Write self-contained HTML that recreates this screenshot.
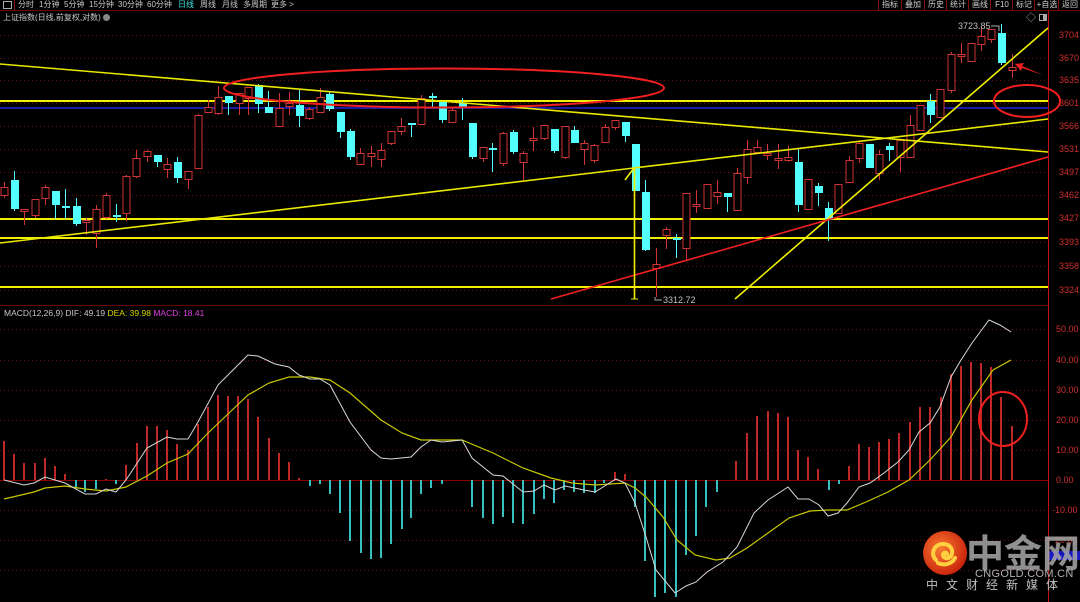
<!DOCTYPE html>
<html><head><meta charset="utf-8"><style>
html,body{margin:0;padding:0;background:#000;width:1080px;height:602px;overflow:hidden}
body{font-family:"Liberation Sans","Noto Sans CJK SC",sans-serif;position:relative}
.tb{position:absolute;top:0;left:0;width:1080px;height:10px;border-bottom:1px solid #6a0000;font-size:8px;line-height:10px;color:#c8c8c8;white-space:nowrap}
.tb span{position:absolute;top:0}
.rb{position:absolute;top:0;height:10px;border-left:1px solid #8a1010;font-size:8px;line-height:10px;color:#d0d0d0;text-align:center}
svg{position:absolute;left:0;top:0}
.r{fill:#000;stroke:#d03434;stroke-width:1}
.c{fill:#54ffff}
</style></head><body>
<svg width="1080" height="602" viewBox="0 0 1080 602">
<g stroke="#6a0c0c" stroke-dasharray="1,3" stroke-width="1">
<path d="M0 35.5H1048M0 58.5H1048M0 80.5H1048M0 103.5H1048M0 126.5H1048M0 149.5H1048M0 172.5H1048M0 195.5H1048M0 218.5H1048M0 242.5H1048M0 266.5H1048M0 290.5H1048"/>
<path d="M0 329.5H1048M0 360.5H1048M0 390.5H1048M0 420.5H1048M0 450.5H1048M0 510.5H1048M0 540.5H1048M0 570.5H1048"/>
</g>
<path d="M0 480.5H1048" stroke="#8a0000"/>
<path d="M0 305.5H1048" stroke="#6a0000"/>
<path d="M1048.5 11V602" stroke="#c01010"/>
<path d="M0 101H1048M0 219H1048M0 238H1048M0 287H1048" stroke="#f0f000" stroke-width="2"/>
<path d="M0 108H1048" stroke="#1a1aa0" stroke-width="2"/>
<g stroke-width="1">
<path stroke="#d03434" d="M4.5 182V198M24.5 209V225M35.5 199V218M45.5 185V205M86.5 218V235M96.5 205V248M106.5 193V219M126.5 175V221M136.5 150V178M147.5 150V162M167.5 158V178M188.5 171V189M198.5 114V168M208.5 100V113M218.5 86V115M239.5 93V115M248.5 87V115M279.5 93V127M289.5 92V115M309.5 107V120M320.5 88V113M360.5 148V164M371.5 146V167M381.5 143V167M391.5 131V145M401.5 118V135M421.5 95V125M452.5 108V123M483.5 147V162M503.5 132V166M523.5 151V180M533.5 127V151M544.5 125V140M565.5 126V159M584.5 140V165M594.5 144V163M605.5 124V142M615.5 120V130M656.5 248V297M666.5 227V249M686.5 193V260M696.5 190V213M707.5 184V208M717.5 180V204M737.5 168V210M747.5 140V184M757.5 140V153M767.5 144V160M778.5 144V169M788.5 146V162M808.5 179V209M838.5 184V213M849.5 156V183M859.5 141V163M879.5 150V180M900.5 140V172M910.5 115V158M920.5 105V130M940.5 89V117M951.5 52V93M961.5 43V63M971.5 43V61M981.5 27V51M991.5 29V43M1012.5 54V78"/>
<path stroke="#54ffff" d="M14.5 171V211M55.5 191V219M65.5 189V219M76.5 198V226M116.5 204V222M157.5 155V167M177.5 157V183M228.5 96V115M258.5 84V113M268.5 91V113M299.5 90V127M329.5 92V111M340.5 112V138M350.5 129V160M411.5 123V137M432.5 93V107M442.5 102V123M462.5 98V120M472.5 123V159M492.5 143V172M513.5 130V154M554.5 129V153M574.5 126V143M625.5 122V142M635.5 144V191M645.5 180V251M676.5 234V258M727.5 193V212M798.5 148V212M818.5 183V206M828.5 202V241M869.5 144V168M889.5 143V161M930.5 94V123M1001.5 24V65"/>
</g>
<g class="r">
<rect x="1" y="187.5" width="7" height="8"/><rect x="21" y="209.5" width="7" height="2"/><rect x="32" y="199.5" width="7" height="16"/><rect x="42" y="187.5" width="7" height="11"/><rect x="83" y="220.5" width="7" height="2"/><rect x="93" y="209.5" width="7" height="24"/><rect x="103" y="195.5" width="7" height="22"/><rect x="123" y="176.5" width="7" height="37"/><rect x="133" y="158.5" width="7" height="18"/><rect x="144" y="151.5" width="7" height="5"/><rect x="164" y="164.5" width="7" height="5"/><rect x="185" y="171.5" width="7" height="8"/><rect x="195" y="115.5" width="7" height="53"/><rect x="205" y="107.5" width="7" height="5"/><rect x="215" y="97.5" width="7" height="16"/><rect x="236" y="93.5" width="7" height="10"/><rect x="245" y="87.5" width="7" height="11"/><rect x="276" y="108.5" width="7" height="18"/><rect x="286" y="103.5" width="7" height="3"/><rect x="306" y="109.5" width="7" height="9"/><rect x="317" y="97.5" width="7" height="15"/><rect x="357" y="153.5" width="7" height="11"/><rect x="368" y="153.5" width="7" height="3"/><rect x="378" y="150.5" width="7" height="9"/><rect x="388" y="131.5" width="7" height="12"/><rect x="398" y="126.5" width="7" height="5"/><rect x="418" y="98.5" width="7" height="26"/><rect x="449" y="110.5" width="7" height="12"/><rect x="480" y="147.5" width="7" height="11"/><rect x="500" y="133.5" width="7" height="30"/><rect x="520" y="153.5" width="7" height="9"/><rect x="530" y="138.5" width="7" height="2"/><rect x="541" y="125.5" width="7" height="13"/><rect x="562" y="126.5" width="7" height="31"/><rect x="581" y="143.5" width="7" height="6"/><rect x="591" y="145.5" width="7" height="15"/><rect x="602" y="127.5" width="7" height="15"/><rect x="612" y="120.5" width="7" height="7"/><rect x="653" y="264.5" width="7" height="4"/><rect x="663" y="229.5" width="7" height="6"/><rect x="683" y="193.5" width="7" height="55"/><rect x="693" y="204.5" width="7" height="2"/><rect x="704" y="184.5" width="7" height="24"/><rect x="714" y="192.5" width="7" height="4"/><rect x="734" y="173.5" width="7" height="37"/><rect x="744" y="149.5" width="7" height="28"/><rect x="754" y="147.5" width="7" height="5"/><rect x="764" y="153.5" width="7" height="2"/><rect x="775" y="158.5" width="7" height="2"/><rect x="785" y="157.5" width="7" height="3"/><rect x="805" y="179.5" width="7" height="30"/><rect x="835" y="184.5" width="7" height="29"/><rect x="846" y="160.5" width="7" height="22"/><rect x="856" y="143.5" width="7" height="15"/><rect x="876" y="154.5" width="7" height="19"/><rect x="897" y="140.5" width="7" height="17"/><rect x="907" y="125.5" width="7" height="32"/><rect x="917" y="105.5" width="7" height="25"/><rect x="937" y="89.5" width="7" height="28"/><rect x="948" y="54.5" width="7" height="36"/><rect x="958" y="54.5" width="7" height="2"/><rect x="968" y="43.5" width="7" height="18"/><rect x="978" y="36.5" width="7" height="8"/><rect x="988" y="29.5" width="7" height="10"/><rect x="1009" y="67.5" width="7" height="3"/>
</g>
<g class="c">
<rect x="11" y="180" width="8" height="29"/><rect x="52" y="191" width="8" height="14"/><rect x="62" y="206" width="8" height="2"/><rect x="73" y="206" width="8" height="18"/><rect x="113" y="215" width="8" height="2"/><rect x="154" y="155" width="8" height="7"/><rect x="174" y="162" width="8" height="16"/><rect x="225" y="96" width="8" height="7"/><rect x="255" y="85" width="8" height="19"/><rect x="265" y="107" width="8" height="6"/><rect x="296" y="105" width="8" height="11"/><rect x="326" y="94" width="8" height="15"/><rect x="337" y="112" width="8" height="20"/><rect x="347" y="131" width="8" height="26"/><rect x="408" y="123" width="8" height="2"/><rect x="429" y="96" width="8" height="2"/><rect x="439" y="102" width="8" height="18"/><rect x="459" y="103" width="8" height="4"/><rect x="469" y="123" width="8" height="34"/><rect x="489" y="148" width="8" height="2"/><rect x="510" y="132" width="8" height="20"/><rect x="551" y="129" width="8" height="22"/><rect x="571" y="130" width="8" height="13"/><rect x="622" y="122" width="8" height="14"/><rect x="632" y="144" width="8" height="47"/><rect x="642" y="192" width="8" height="58"/><rect x="673" y="238" width="8" height="2"/><rect x="724" y="193" width="8" height="4"/><rect x="795" y="162" width="8" height="43"/><rect x="815" y="186" width="8" height="7"/><rect x="825" y="208" width="8" height="12"/><rect x="866" y="144" width="8" height="24"/><rect x="886" y="146" width="8" height="4"/><rect x="927" y="101" width="8" height="14"/><rect x="998" y="33" width="8" height="30"/>
</g>
<path d="M0 64L1048 152" stroke="#e8e800" stroke-width="1.6"/>
<path d="M0 243L1048 119" stroke="#e8e800" stroke-width="1.6"/>
<path d="M735 299L1048 28" stroke="#f0f000" stroke-width="1.6"/>
<path d="M551 299L1048 157" stroke="#f02020" stroke-width="1.6"/>
<path d="M634.5 168V299M625 180L634 168" stroke="#f0f000" stroke-width="1.6"/>
<path d="M631 299H638" stroke="#f0f000"/>
<ellipse cx="444" cy="88" rx="220" ry="19.5" fill="none" stroke="#f02020" stroke-width="2"/>
<ellipse cx="1027" cy="101" rx="33" ry="16" fill="none" stroke="#f02020" stroke-width="2"/>
<path d="M1043 75L1022 66L1024 63L1015 64L1021 71L1022 68Z" fill="#f02020"/>
<path d="M991 26H999V31" stroke="#aaa" fill="none"/>
<text x="958" y="29" font-size="9" fill="#c0c0c0">3723.85</text>
<path d="M655 297V300H662" stroke="#aaa" fill="none"/>
<text x="663" y="303" font-size="9" fill="#c0c0c0">3312.72</text>
<text x="1026" y="21" font-size="10" fill="#aaa">◇</text>
<rect x="1039.5" y="14.5" width="7" height="6" fill="none" stroke="#aaa"/>
<rect x="1043" y="15" width="3" height="5" fill="#aaa"/>
<g font-size="9" fill="#d03030">
<text x="1059" y="38">3704</text><text x="1059" y="61">3670</text><text x="1059" y="83">3635</text><text x="1059" y="106">3601</text><text x="1059" y="129">3566</text><text x="1059" y="152">3531</text><text x="1059" y="175">3497</text><text x="1059" y="198">3462</text><text x="1059" y="221">3427</text><text x="1059" y="245">3393</text><text x="1059" y="269">3358</text><text x="1059" y="293">3324</text>
<text x="1056" y="332">50.00</text><text x="1056" y="363">40.00</text><text x="1056" y="393">30.00</text><text x="1056" y="423">20.00</text><text x="1056" y="453">10.00</text><text x="1056" y="483">0.00</text><text x="1052" y="513">-10.00</text><text x="1052" y="543">-20.00</text>
</g>
<rect x="1049" y="551" width="31" height="9" fill="#1818c0"/>
<path stroke="#c02828" stroke-width="2" d="M4 480V441M14 480V454M24 480V463M35 480V463M45 480V458M55 480V466M65 480V474M106 480V479M126 480V465M137 480V443M147 480V426M157 480V426M167 480V430M177 480V444M188 480V450M198 480V424M208 480V407M218 480V395M228 480V396M238 480V396M248 480V399M258 480V417M269 480V438M279 480V453M289 480V462M299 480V478M615 480V472M625 480V474M736 480V461M747 480V433M757 480V416M768 480V411M778 480V413M788 480V417M798 480V450M808 480V457M818 480V469M849 480V466M859 480V444M869 480V447M879 480V442M889 480V439M899 480V433M910 480V422M920 480V407M930 480V407M941 480V397M951 480V374M961 480V366M971 480V362M981 480V363M991 480V367M1001 480V397M1012 480V426"/>
<path stroke="#38c0c0" stroke-width="2" d="M76 480V487M85 480V492M96 480V489M116 480V484M310 480V486M320 480V484M330 480V494M340 480V513M350 480V541M361 480V553M371 480V559M381 480V558M391 480V544M402 480V529M411 480V518M421 480V494M431 480V488M442 480V484M472 480V507M483 480V518M493 480V524M503 480V517M513 480V523M523 480V524M534 480V514M544 480V499M554 480V503M564 480V490M574 480V492M584 480V493M595 480V493M604 480V483M635 480V507M645 480V561M655 480V597M665 480V593M676 480V597M686 480V555M696 480V536M706 480V507M717 480V492M829 480V490M839 480V484"/>
<polyline fill="none" stroke="#c8c800" stroke-width="1.2" points="4,499 34,492 45,488 65,486 85,489 106,491 126,487 147,476 167,463 188,454 208,433 228,414 248,395 269,383 289,377 310,377 330,380 350,393 381,420 402,433 421,440 462,440 493,453 523,468 551,478 572,483 595,485 625,483 635,488 646,497 663,517 677,540 695,555 716,560 730,558 747,548 768,533 789,518 810,511 828,510 847,510 866,502 888,492 909,480 930,460 951,437 972,400 993,370 1011,360"/>
<polyline fill="none" stroke="#d8d8d8" stroke-width="1" points="4,480 24,485 34,483 45,477 65,483 85,494 96,494 106,489 116,492 126,480 147,448 167,437 177,439 188,439 198,422 218,385 238,365 248,355 258,356 275,364 289,367 299,375 310,379 320,379 330,385 350,422 371,450 381,458 391,459 411,457 421,447 431,440 442,442 462,440 472,458 493,475 503,476 513,484 523,492 534,491 544,485 555,490 565,486 584,490 595,492 616,479 625,483 635,503 646,537 656,570 675,593 686,586 696,582 707,572 723,562 737,547 754,513 768,500 788,487 798,499 809,499 819,505 828,516 838,513 847,503 859,487 870,483 884,473 898,462 909,450 919,432 930,423 940,407 951,377 961,360 972,343 989,320 1000,325 1011,332"/>
<ellipse cx="1003" cy="419" rx="24" ry="27" fill="none" stroke="#f02020" stroke-width="2"/>
<text x="4" y="316" font-size="8.5" fill="#c8c8c8">MACD(12,26,9)  DIF: 49.19 <tspan fill="#d8d800">DEA: 39.98</tspan> <tspan fill="#e040e0">MACD: 18.41</tspan></text>
<defs><radialGradient id="g" cx="40%" cy="40%" r="65%"><stop offset="0" stop-color="#f87a30"/><stop offset="1" stop-color="#c8200c"/></radialGradient></defs>
<circle cx="945" cy="553" r="22" fill="url(#g)"/>
<path d="M936 560c-6-6-2-16 7-16c8 0 11 7 8 12c-3 4-8 2-8-1c0-3 4-3 4-1M938 563c6 3 14 1 17-5" fill="none" stroke="#ffd040" stroke-width="4" stroke-linecap="round"/>
<text x="966" y="567" font-size="38" font-weight="bold" fill="#a8a8a8" font-family="'Noto Sans CJK SC',sans-serif" opacity="0.85">中金网</text>
<text x="975" y="577" font-size="11" fill="#b0b0b0" letter-spacing="0.3">CNGOLD.COM.CN</text>
<text x="926" y="589" font-size="12" fill="#c0c0c0" letter-spacing="8" font-family="'Noto Sans CJK SC',sans-serif">中文财经新媒体</text>
</svg>
<div class="tb">
<span style="left:3px;top:1px;width:7px;height:6px;border:1px solid #aaa"></span>
<span style="left:14px;height:10px;border-left:1px solid #8a1010"></span>
<span style="left:18px">分时</span><span style="left:39px">1分钟</span><span style="left:64px">5分钟</span><span style="left:89px">15分钟</span><span style="left:118px">30分钟</span><span style="left:147px">60分钟</span><span style="left:178px;color:#40e0e0">日线</span><span style="left:200px">周线</span><span style="left:222px">月线</span><span style="left:243px">多周期</span><span style="left:271px">更多 &gt;</span>
</div>
<div class="rb" style="left:878px;width:22px">指标</div><div class="rb" style="left:901px;width:22px">叠加</div><div class="rb" style="left:924px;width:22px">历史</div><div class="rb" style="left:946px;width:22px">统计</div><div class="rb" style="left:968px;width:22px">画线</div><div class="rb" style="left:990px;width:22px">F10</div><div class="rb" style="left:1012px;width:22px">标记</div><div class="rb" style="left:1034px;width:24px">+自选</div><div class="rb" style="left:1058px;width:22px">返回</div>
<div style="position:absolute;left:3px;top:12px;font-size:8px;line-height:11px;color:#c8c8c8;white-space:nowrap">上证指数(日线,前复权,对数) <span style="display:inline-block;width:7px;height:7px;border-radius:50%;background:#888;vertical-align:-1px"></span></div>
</body></html>
